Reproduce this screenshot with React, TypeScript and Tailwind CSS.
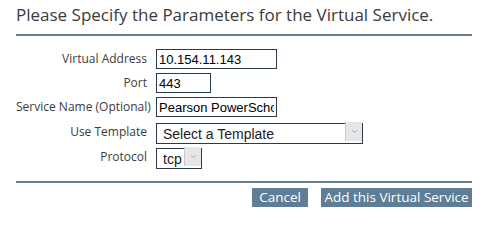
import { ChevronDown } from 'lucide-react'

function Field({ label, children }: { label: string; children: React.ReactNode }) {
  return (
    <>
      <div className="whitespace-nowrap text-right text-[12px] leading-5 text-[#3c3c3c]">{label}</div>
      <div className="flex">{children}</div>
    </>
  )
}

function Select({ value, width }: { value: string; width: string }) {
  return (
    <div className={`relative h-[21px] ${width}`}>
      <select
        defaultValue={value}
        className="h-full w-full appearance-none border border-[#2b3b4c] bg-white pl-[6px] text-[14px] text-[#222] outline-none [font-family:'Liberation_Sans',Arial,sans-serif]"
      >
        <option>{value}</option>
      </select>
      <div className="pointer-events-none absolute right-px top-px bottom-px flex w-[17px] items-center justify-center border-l border-[#c8c8c8] bg-[#e6e6e6]">
        <ChevronDown className="h-[9px] w-[9px] text-[#888]" strokeWidth={1.75} />
      </div>
    </div>
  )
}

export default function App() {
  return (
    <div className="h-[222px] w-[486px] bg-white pl-4 pr-[14px] [font-family:'Open_Sans',sans-serif]">
      <h2 className="pt-[4px] pb-[8px] text-[17px] leading-[22px] text-[#3a3a3a]">
        Please Specify the Parameters for the Virtual Service.
      </h2>
      <div className="h-[2px] bg-[#647d8e]" />

      <div className="mt-[13px] grid grid-cols-[131px_auto] items-center gap-x-[9px] gap-y-1">
        <Field label="Virtual Address">
          <input
            defaultValue="10.154.11.143"
            className="h-5 w-[121px] border border-[#2b3b4c] px-[2px] text-[13px] text-black outline-none [font-family:'Liberation_Sans',Arial,sans-serif]"
          />
        </Field>
        <Field label="Port">
          <input
            defaultValue="443"
            className="h-5 w-[55px] border border-[#2b3b4c] px-[2px] text-[13px] text-black outline-none [font-family:'Liberation_Sans',Arial,sans-serif]"
          />
        </Field>
        <Field label="Service Name (Optional)">
          <input
            defaultValue="Pearson PowerSchool"
            className="h-5 w-[121px] border border-[#2b3b4c] px-[2px] text-[13px] text-black outline-none [font-family:'Liberation_Sans',Arial,sans-serif]"
          />
        </Field>
        <Field label="Use Template">
          <Select value="Select a Template" width="w-[207px]" />
        </Field>
        <Field label="Protocol">
          <Select value="tcp" width="w-[46px]" />
        </Field>
      </div>

      <div className="mt-[14px] h-[2px] bg-[#647d8e]" />

      <div className="mt-[5px] flex justify-end gap-[13px]">
        <button className="h-[19px] w-[56px] bg-[#5f7d95] text-[13.5px] leading-[19px] text-white">
          Cancel
        </button>
        <button className="h-[19px] w-[151px] bg-[#5f7d95] text-[13.5px] leading-[19px] text-white">
          Add this Virtual Service
        </button>
      </div>
    </div>
  )
}
